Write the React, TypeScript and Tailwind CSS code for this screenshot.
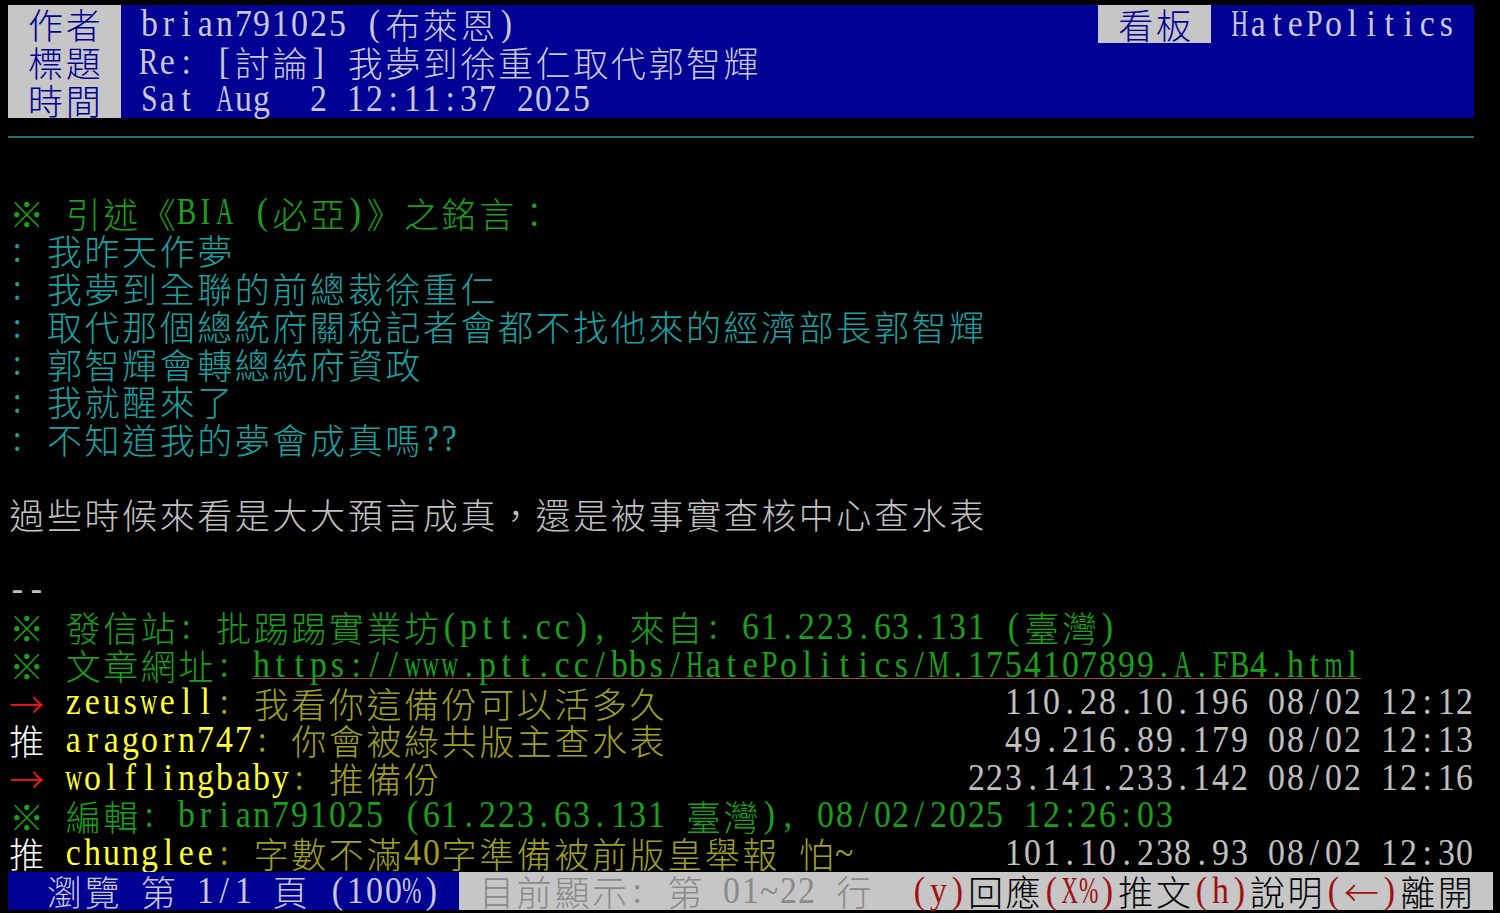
import React from "react"

type Seg = { t: string; c: string; u?: boolean }

// terminal palette (PTT-ish)
const GRAY = "text-[#c0c0c0]"
const GREEN = "text-[#1aa01a]"
const CYAN = "text-[#1aa0a0]"
const DKYEL = "text-[#a0a020]"
const YEL = "text-[#ffff33]"
const RED = "text-[#f01818]"
const WHITE = "text-white"
const ONBLUE = "bg-[#000094] text-[#c8c8d8]"
const INV = "bg-[#c6c6c6] text-[#000094]"
const STAT_DIM = "bg-[#c6c6c6] text-[#8a8a8a]"
const STAT_RED = "bg-[#c6c6c6] text-[#a01010]"
const STAT_BLK = "bg-[#c6c6c6] text-black"

const cellWidth = (ch: string) => (ch.charCodeAt(0) > 127 ? 2 : 1)
const textWidth = (s: string) => [...s].reduce((n, ch) => n + cellWidth(ch), 0)
const pad = (s: string, cols: number) => s + " ".repeat(Math.max(0, cols - textWidth(s)))

// Times glyphs are wider than a half cell, squeeze them like the terminal font
function squeeze(ch: string) {
	if ("mMwWX%AHNDGOQUVY@".includes(ch)) return "scale-x-[0.62]"
	if (/[A-Z]/.test(ch)) return "scale-x-[0.78]"
	return "scale-x-[0.9]"
}

function push(tag: "推" | "→", user: string, text: string, ipdate: string): Seg[] {
	const left = `${tag} ${user}: ${text}`
	const gap = 78 - textWidth(left) - textWidth(ipdate)
	return [
		{ t: `${tag} `, c: tag === "推" ? WHITE : RED },
		{ t: user, c: YEL },
		{ t: `: ${text}${" ".repeat(gap)}`, c: DKYEL },
		{ t: ipdate, c: GRAY },
	]
}

const rows: (Seg[] | "rule")[] = [
	[
		{ t: " 作者 ", c: INV },
		{ t: pad(" brian791025 (布萊恩)", 52), c: ONBLUE },
		{ t: " 看板 ", c: INV },
		{ t: " HatePolitics ", c: ONBLUE },
	],
	[
		{ t: " 標題 ", c: INV },
		{ t: pad(" Re: [討論] 我夢到徐重仁取代郭智輝", 72), c: ONBLUE },
	],
	[
		{ t: " 時間 ", c: INV },
		{ t: pad(" Sat Aug  2 12:11:37 2025", 72), c: ONBLUE },
	],
	"rule",
	[],
	[{ t: "※ 引述《BIA (必亞)》之銘言：", c: GREEN }],
	[{ t: ": 我昨天作夢", c: CYAN }],
	[{ t: ": 我夢到全聯的前總裁徐重仁", c: CYAN }],
	[{ t: ": 取代那個總統府關稅記者會都不找他來的經濟部長郭智輝", c: CYAN }],
	[{ t: ": 郭智輝會轉總統府資政", c: CYAN }],
	[{ t: ": 我就醒來了", c: CYAN }],
	[{ t: ": 不知道我的夢會成真嗎??", c: CYAN }],
	[],
	[{ t: "過些時候來看是大大預言成真，還是被事實查核中心查水表", c: GRAY }],
	[],
	[{ t: "--", c: GRAY }],
	[{ t: "※ 發信站: 批踢踢實業坊(ptt.cc), 來自: 61.223.63.131 (臺灣)", c: GREEN }],
	[
		{ t: "※ 文章網址: ", c: GREEN },
		{ t: "https://www.ptt.cc/bbs/HatePolitics/M.1754107899.A.FB4.html", c: GREEN, u: true },
	],
	push("→", "zeuswell", "我看你這備份可以活多久", "110.28.10.196 08/02 12:12"),
	push("推", "aragorn747", "你會被綠共版主查水表", "49.216.89.179 08/02 12:13"),
	push("→", "wolflingbaby", "推備份", "223.141.233.142 08/02 12:16"),
	[{ t: "※ 編輯: brian791025 (61.223.63.131 臺灣), 08/02/2025 12:26:03", c: GREEN }],
	push("推", "chunglee", "字數不滿40字準備被前版皇舉報 怕~", "101.10.238.93 08/02 12:30"),
	[
		{ t: "  瀏覽 第 1/1 頁 (100%) ", c: ONBLUE },
		{ t: " 目前顯示: 第 01~22 行  ", c: STAT_DIM },
		{ t: "(y)", c: STAT_RED },
		{ t: "回應", c: STAT_BLK },
		{ t: "(X%)", c: STAT_RED },
		{ t: "推文", c: STAT_BLK },
		{ t: "(h)", c: STAT_RED },
		{ t: "說明", c: STAT_BLK },
		{ t: "(←)", c: STAT_RED },
		{ t: "離開", c: STAT_BLK },
		{ t: " ", c: STAT_BLK },
	],
]

function Cell({ ch, c }: { ch: string; c: string }) {
	const wide = cellWidth(ch) === 2
	if (wide) {
		return (
			<span
				className={`flex h-full w-[37.6px] shrink-0 items-center justify-center font-['Noto_Sans_CJK_TC',sans-serif] text-[35px] leading-none font-light ${c}`}
			>
				{ch}
			</span>
		)
	}
	return (
		<span
			className={`flex h-full w-[18.8px] shrink-0 items-center justify-center font-['Liberation_Serif',serif] text-[37.6px] leading-none ${c}`}
		>
			<span className={`inline-block ${squeeze(ch)}`}>{ch === " " ? "\u00a0" : ch}</span>
		</span>
	)
}

function Segment({ seg }: { seg: Seg }) {
	return (
		<span className="relative flex h-full">
			{[...seg.t].map((ch, i) => (
				<Cell key={i} ch={ch} c={seg.c} />
			))}
			{seg.u && <span className="absolute right-0 bottom-[4px] left-0 h-px bg-[#a04a2a]" />}
		</span>
	)
}

function TermRow({ row }: { row: Seg[] | "rule" }) {
	if (row === "rule") {
		return (
			<div className="flex h-[37.7px] items-center">
				<div className="h-[2px] w-[1466.4px] bg-[#137878]" />
			</div>
		)
	}
	return (
		<div className="flex h-[37.7px]">
			{row.map((seg, i) => (
				<Segment key={i} seg={seg} />
			))}
		</div>
	)
}

export default function App() {
	return (
		<div className="h-[913px] w-[1500px] overflow-hidden bg-black pt-[5px] pl-[8px]">
			{rows.map((row, i) => (
				<TermRow key={i} row={row} />
			))}
		</div>
	)
}
